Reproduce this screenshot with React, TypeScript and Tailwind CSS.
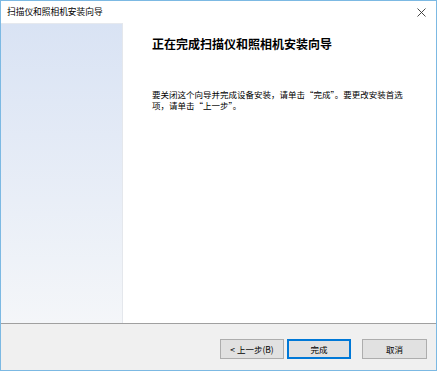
import React from "react";

const font = "font-['Microsoft_YaHei','Noto_Sans_CJK_SC',sans-serif]";

export default function App() {
  return (
    <div
      className={`w-[437px] h-[371px] flex flex-col border border-[#7cb9e3] bg-white text-black ${font}`}
    >
      {/* Title bar */}
      <div className="h-[22px] flex items-center justify-between pl-[6px] pr-[8px] shrink-0">
        <span className="text-[8.7px] leading-none">扫描仪和照相机安装向导</span>
        <svg width="9" height="9" viewBox="0 0 9 9" className="mr-[2px]">
          <path d="M0.5 0.5 L8.5 8.5 M8.5 0.5 L0.5 8.5" stroke="#333" strokeWidth="0.9" />
        </svg>
      </div>

      {/* Content */}
      <div className="h-[300px] flex shrink-0">
        <div className="w-[122px] h-full border-t border-[#e6e9ee] border-r border-r-[#e4e7ec] bg-gradient-to-b from-[#d9e3f4] to-[#f4f6f9]" />
        <div className="flex-1 pl-[29px] pt-[13px]">
          <h1 className="text-[12px] font-bold leading-[16px]">正在完成扫描仪和照相机安装向导</h1>
          <p className="mt-[37px] text-[8.5px] leading-[11px]">
            要关闭这个向导并完成设备安装，请单击“完成”。要更改安装首选
            <br />
            项，请单击“上一步”。
          </p>
        </div>
      </div>

      {/* Separator */}
      <div className="h-px bg-[#a0a0a0] shrink-0" />

      {/* Footer */}
      <div className="flex-1 bg-[#f0f0f0] flex items-start justify-end pt-[15px] pr-[9px]">
        <button className="w-[64px] h-[20px] bg-[#e1e1e1] border border-[#adadad] text-[8.5px] leading-none">
          &lt; 上一步(B)
        </button>
        <button className="ml-[3px] w-[64px] h-[20px] bg-[#e1e1e1] border-2 border-[#0078d7] text-[8.5px] leading-none">
          完成
        </button>
        <button className="ml-[11px] w-[65px] h-[20px] bg-[#e1e1e1] border border-[#adadad] text-[8.5px] leading-none">
          取消
        </button>
      </div>
    </div>
  );
}
